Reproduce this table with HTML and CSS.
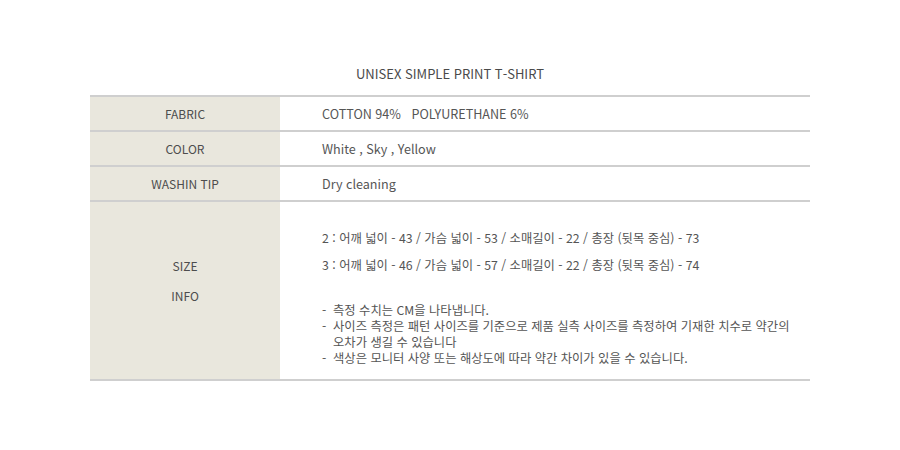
FILE: index.html
```html
<!DOCTYPE html>
<html lang="ko">
<head>
<meta charset="utf-8">
<link rel="stylesheet" href="styles.css">
</head>
<body>
<div class="wrap">
  <h1 class="title">UNISEX SIMPLE PRINT T-SHIRT</h1>
  <div class="table">
    <div class="row">
      <div class="th">FABRIC</div>
      <div class="td">COTTON 94%&nbsp;&nbsp; POLYURETHANE 6%</div>
    </div>
    <div class="row">
      <div class="th">COLOR</div>
      <div class="td">White , Sky , Yellow</div>
    </div>
    <div class="row">
      <div class="th">WASHIN TIP</div>
      <div class="td">Dry cleaning</div>
    </div>
    <div class="row row-size">
      <div class="th th-size">
        <span>SIZE</span>
        <span>INFO</span>
      </div>
      <div class="td td-size">
        <p class="size-line">2 : 어깨 넓이 - 43 / 가슴 넓이 - 53 / 소매길이 - 22 / 총장 (뒷목 중심) - 73</p>
        <p class="size-line">3 : 어깨 넓이 - 46 / 가슴 넓이 - 57 / 소매길이 - 22 / 총장 (뒷목 중심) - 74</p>
        <ul class="notes">
          <li>측정 수치는 CM을 나타냅니다.</li>
          <li>사이즈 측정은 패턴 사이즈를 기준으로 제품 실측 사이즈를 측정하여 기재한 치수로 약간의<br>오차가 생길 수 있습니다</li>
          <li>색상은 모니터 사양 또는 해상도에 따라 약간 차이가 있을 수 있습니다.</li>
        </ul>
      </div>
    </div>
  </div>
</div>
</body>
</html>
```

FILE: styles.css
```css
* { box-sizing: border-box; }
html, body { margin: 0; padding: 0; background: #fff; }
body {
  font-family: "Noto Sans CJK KR", "Noto Sans", sans-serif;
  color: #555;
  font-size: 12px;
}
.wrap {
  width: 720px;
  margin-left: 90px;
  padding-top: 65px;
}
.title {
  margin: 0;
  height: 30px;
  line-height: 18px;
  font-size: 13px;
  font-weight: 400;
  text-align: center;
  color: #4a4a4a;
}
.table {
  border-top: 2px solid #cfcfcf;
}
.row {
  display: flex;
  height: 35px;
  border-bottom: 2px solid #cfcfcf;
}
.th {
  width: 190px;
  flex: none;
  background: #e9e7dd;
  display: flex;
  align-items: center;
  justify-content: center;
  font-size: 12px;
  color: #4d4d4d;
}
.td {
  flex: 1;
  display: flex;
  align-items: center;
  padding-left: 42px;
  font-size: 12.6px;
  color: #555;
}
.row-size { height: 179px; }
.th-size {
  flex-direction: column;
  justify-content: flex-start;
  padding-top: 55px;
  gap: 13px;
}
.td-size {
  flex-direction: column;
  align-items: flex-start;
  padding-top: 27px;
}
.size-line {
  margin: 0 0 9px;
  line-height: 18px;
  font-size: 12.3px;
}
.notes {
  list-style: none;
  margin: 19px 0 0;
  padding: 0;
  font-size: 12.3px;
  line-height: 16px;
}
.notes li {
  position: relative;
  padding-left: 11px;
}
.notes li::before {
  content: "-";
  position: absolute;
  left: 0;
  top: 0;
}
```
